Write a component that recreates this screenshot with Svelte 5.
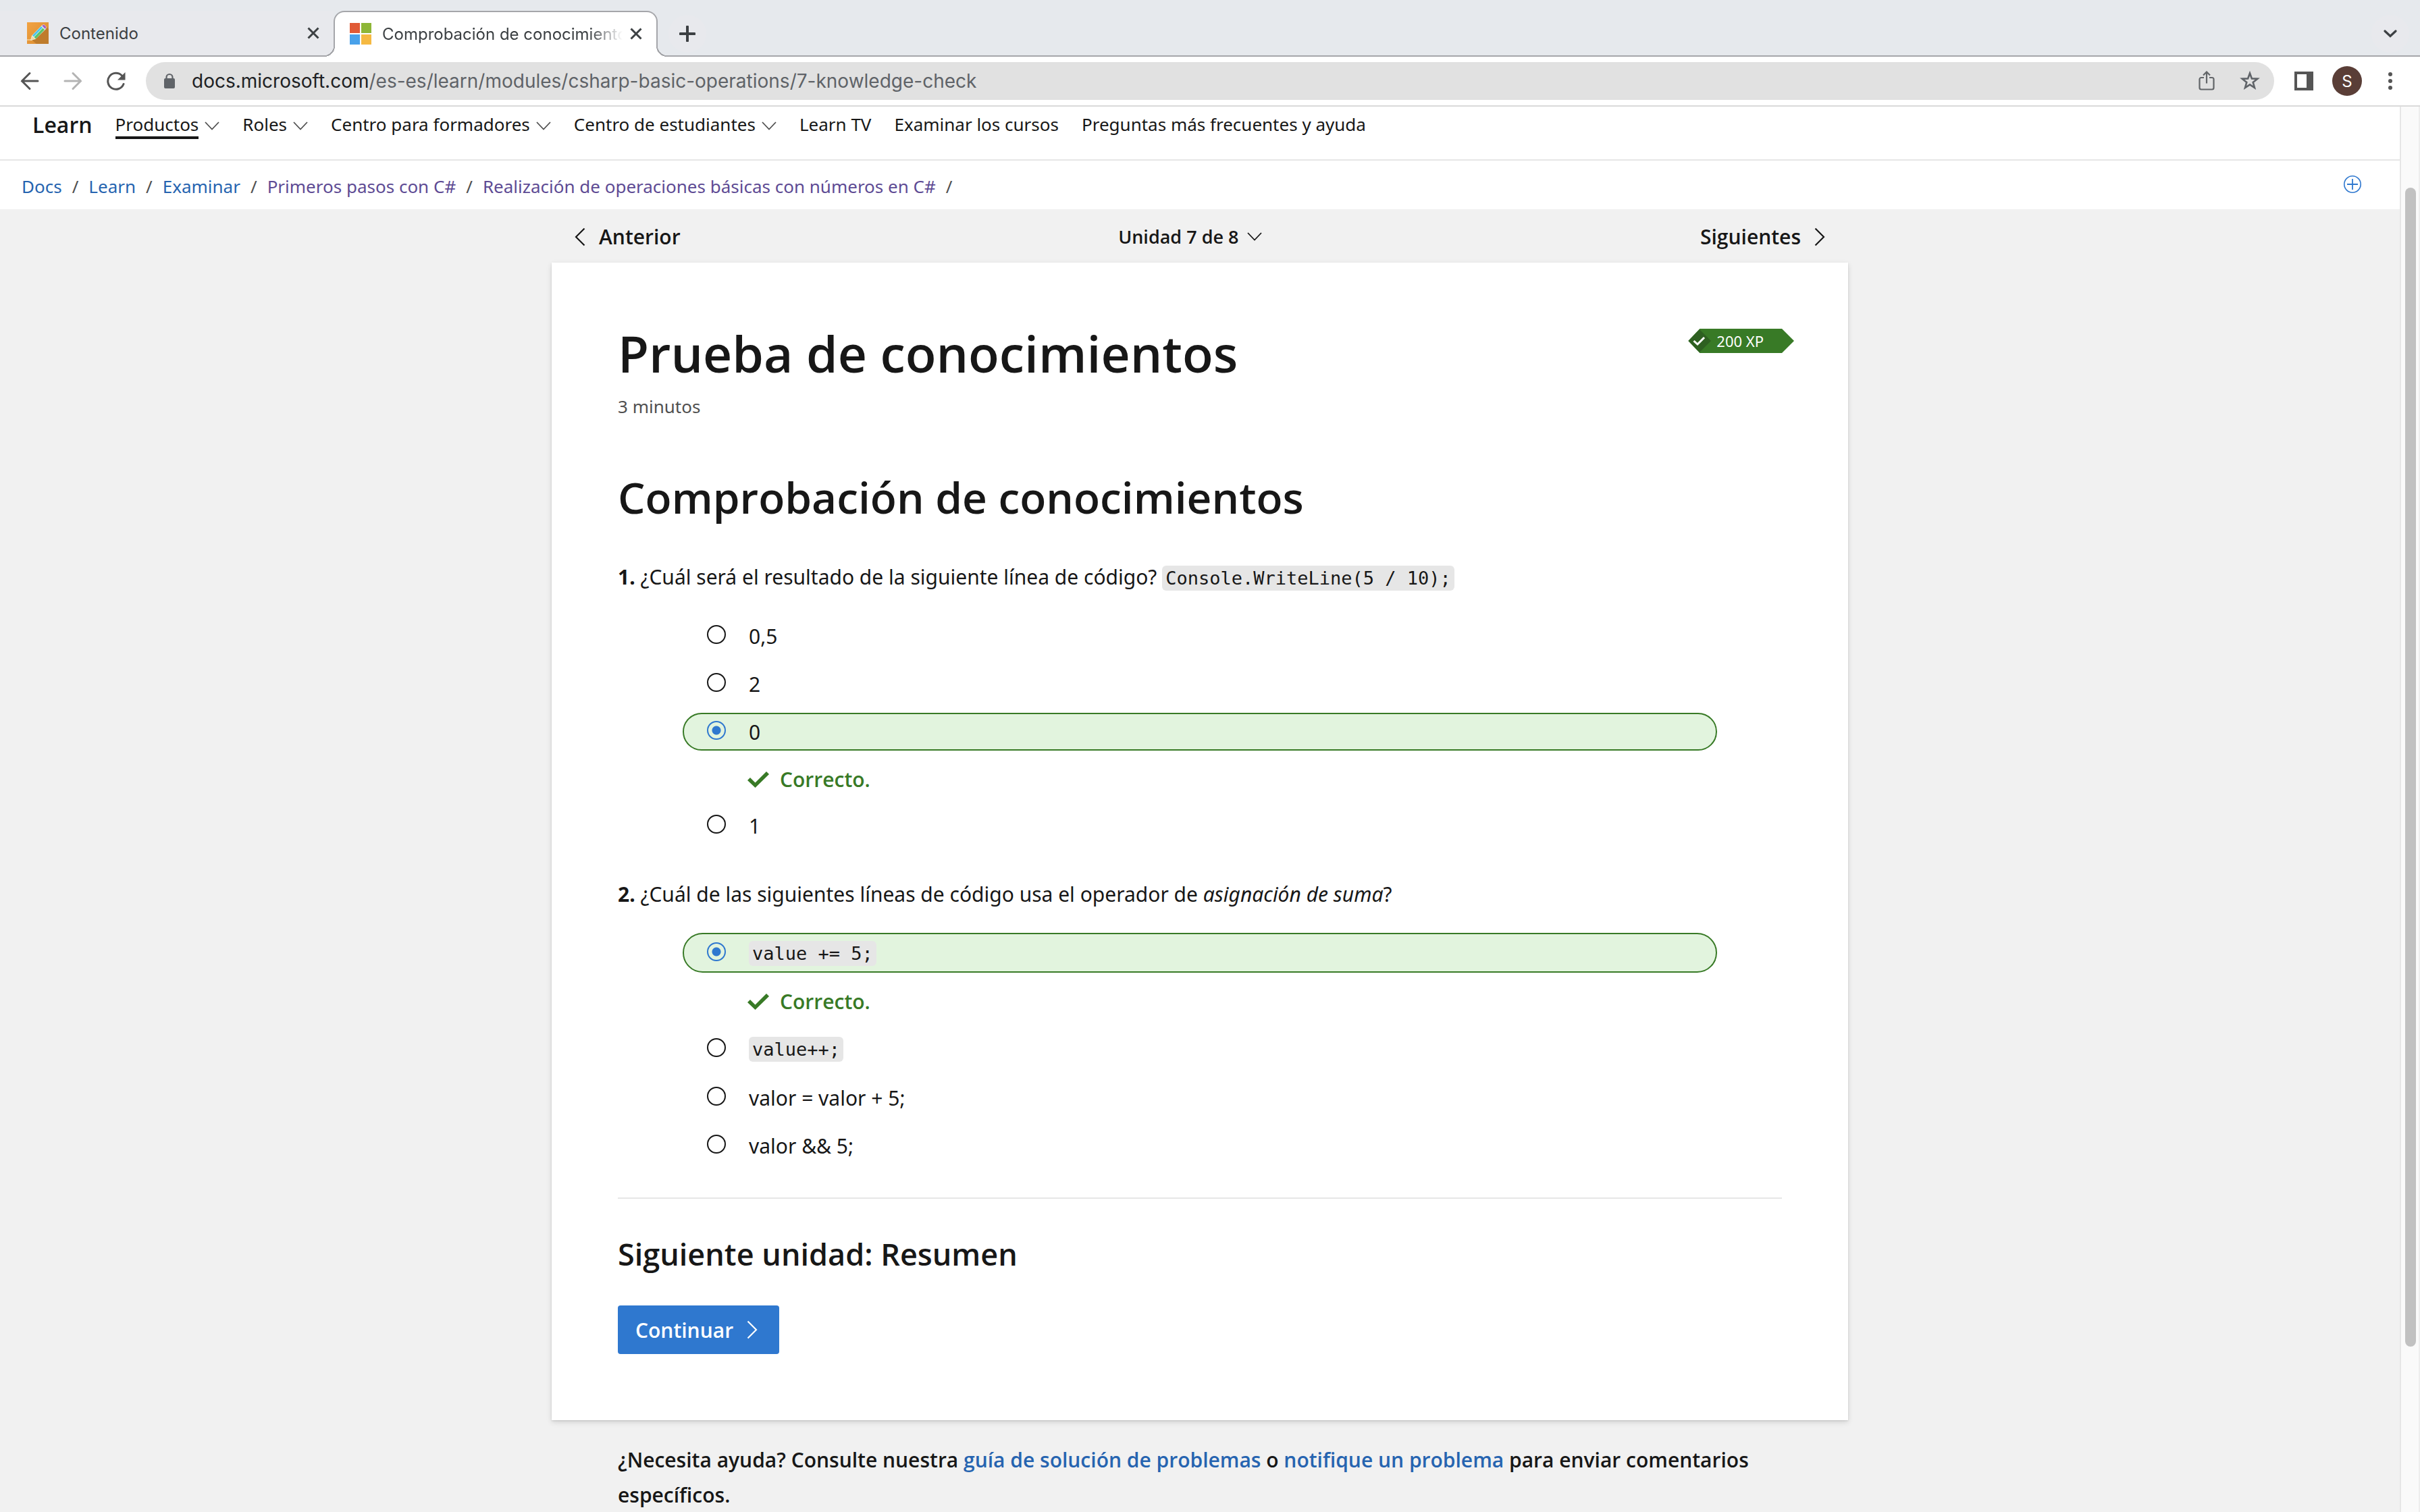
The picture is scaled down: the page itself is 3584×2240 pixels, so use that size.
<script>
  const menu = [
    { label: 'Productos', drop: true, active: true },
    { label: 'Roles', drop: true },
    { label: 'Centro para formadores', drop: true },
    { label: 'Centro de estudiantes', drop: true },
    { label: 'Learn TV' },
    { label: 'Examinar los cursos' },
    { label: 'Preguntas más frecuentes y ayuda' }
  ];

  const crumbs = [
    { label: 'Docs' },
    { label: 'Learn' },
    { label: 'Examinar' },
    { label: 'Primeros pasos con C#', visited: true },
    { label: 'Realización de operaciones básicas con números en C#', visited: true }
  ];

  const questions = $state([
    {
      text: '¿Cuál será el resultado de la siguiente línea de código?',
      code: 'Console.WriteLine(5 / 10);',
      options: [{ text: '0,5' }, { text: '2' }, { text: '0', correct: true }, { text: '1' }],
      picked: 2
    },
    {
      text: '¿Cuál de las siguientes líneas de código usa el operador de',
      emphasis: 'asignación de suma',
      options: [
        { text: 'value += 5;', code: true, correct: true },
        { text: 'value++;', code: true },
        { text: 'valor = valor + 5;' },
        { text: 'valor && 5;' }
      ],
      picked: 0
    }
  ]);
</script>

{#snippet cross()}
  <svg width="20" height="20" viewBox="0 0 20 20" aria-hidden="true">
    <path d="M2.5 2.5 17.5 17.5M17.5 2.5 2.5 17.5" fill="none" stroke="#3c4043" stroke-width="3" />
  </svg>
{/snippet}

{#snippet chevronDown(color)}
  <svg width="22" height="13" viewBox="0 0 22 13" aria-hidden="true">
    <path d="M1 1 11 11.500 21 1" fill="none" stroke={color} stroke-width="1.800" />
  </svg>
{/snippet}

{#snippet chevronRight()}
  <svg width="16" height="28" viewBox="0 0 16 28" aria-hidden="true">
    <path d="M1.500 1.500 14 14 1.500 26.500" fill="none" stroke="currentColor" stroke-width="2.200" />
  </svg>
{/snippet}

<div class="browser">
  <header class="tabs">
    <div class="tab">
      <svg width="32" height="32" viewBox="0 0 32 32" aria-hidden="true">
        <defs>
          <linearGradient id="wood" x1="0" y1="0" x2="1" y2="1">
            <stop offset="0" stop-color="#f2a342" />
            <stop offset="1" stop-color="#d98a2e" />
          </linearGradient>
        </defs>
        <path d="M0 0h32v32H0z" fill="url(#wood)" />
        <path d="M28 6 32 10V32H14L7 26z" fill="#bf7c2c" />
        <path d="M0 26h8" stroke="#f6cf94" stroke-width="1.500" />
        <path d="M5 27 7 20 22 4.500 25 3 29 7 28 10 12.500 25z" fill="#e9f3ea" />
        <path d="M8 19.500 21 6l2 2L10 21.500z" fill="#4cc3ee" />
        <path d="M10.500 22 23.500 8.500l2.500 2.500L13 24.500z" fill="#5cc46a" />
        <path d="M22 5 25 3.500 28.500 7 27 10z" fill="#a75cc0" />
        <path d="M7.500 20.500 12 24.500 5.500 26.500z" fill="#f4d9a6" />
      </svg>
      <button class="tab-title">Contenido</button>
      <button class="close" aria-label="Cerrar pestaña">{@render cross()}</button>
    </div>
    <div class="tab active">
      <svg width="32" height="32" viewBox="0 0 32 32" aria-hidden="true">
        <path d="M0 0h15v15H0z" fill="#e05a36" />
        <path d="M17 0h15v15H17z" fill="#8db637" />
        <path d="M0 17h15v15H0z" fill="#48a1ea" />
        <path d="M17 17h15v15H17z" fill="#f5b942" />
      </svg>
      <button class="tab-title fade">Comprobación de conocimientos</button>
      <button class="close" aria-label="Cerrar pestaña">{@render cross()}</button>
    </div>
    <button class="round" aria-label="Nueva pestaña">
      <svg width="24" height="24" viewBox="0 0 24 24" aria-hidden="true">
        <path d="M12 1.500v21M1.500 12h21" stroke="#3c4043" stroke-width="4" stroke-linecap="round" />
      </svg>
    </button>
    <button class="round last" aria-label="Buscar pestañas">
      <svg width="20" height="12" viewBox="0 0 20 12" aria-hidden="true">
        <path d="M2 2 10 9.500 18 2" fill="none" stroke="#3c4043" stroke-width="3.200" stroke-linecap="round" />
      </svg>
    </button>
  </header>

  <div class="toolbar">
    <button class="tool" aria-label="Atrás">
      <svg width="28" height="28" viewBox="0 0 28 28" fill="none" stroke="#555" stroke-width="3" stroke-linecap="round" aria-hidden="true">
        <path d="M26 14H2.500M14 2.500 2.500 14 14 25.500" />
      </svg>
    </button>
    <button class="tool" aria-label="Adelante">
      <svg width="28" height="28" viewBox="0 0 28 28" fill="none" stroke="#b4b4b4" stroke-width="3" stroke-linecap="round" aria-hidden="true">
        <path d="M2 14h23.500M14 2.500 25.500 14 14 25.500" />
      </svg>
    </button>
    <button class="tool" aria-label="Volver a cargar">
      <svg width="28" height="28" viewBox="0 0 28 28" aria-hidden="true">
        <path d="M25 18.500A12 12 0 1 1 22.500 6" fill="none" stroke="#555" stroke-width="3" stroke-linecap="round" />
        <path d="M27.500 1v11.500H16z" fill="#555" />
      </svg>
    </button>
    <div class="omnibox">
      <svg width="18" height="24" viewBox="0 0 18 24" aria-hidden="true">
        <path d="M4.500 10V6.500a4.500 4.500 0 0 1 9 0V10" fill="none" stroke="#5f6368" stroke-width="2.200" />
        <rect x="1" y="8" width="16" height="15" rx="2" fill="#5f6368" />
      </svg>
      <span class="url">docs.microsoft.com<span class="path">/es-es/learn/modules/csharp-basic-operations/7-knowledge-check</span></span>
      <button class="tool" aria-label="Compartir">
        <svg width="24" height="30" viewBox="0 0 24 30" fill="none" stroke="#626568" stroke-width="2.200" aria-hidden="true">
          <path d="M8 10H4a2.500 2.500 0 0 0-2.500 2.500V25A2.500 2.500 0 0 0 4 27.500h16a2.500 2.500 0 0 0 2.500-2.500V12.500A2.500 2.500 0 0 0 20 10h-4" />
          <path d="M12 18.500V2M7 6.500 12 1.500 17 6.500" />
        </svg>
      </button>
      <button class="tool" aria-label="Añadir a marcadores">
        <svg width="30" height="30" viewBox="0 0 30 30" aria-hidden="true">
          <path d="M15 3.500 17.900 11.400 26.300 11.700 19.700 16.900 22 25 15 20.300 8 25 10.300 16.900 3.700 11.700 12.100 11.400Z" fill="none" stroke="#5f6368" stroke-width="2.600" />
        </svg>
      </button>
    </div>
    <div class="actions">
      <button class="tool" aria-label="Panel lateral">
        <svg width="28" height="28" viewBox="0 0 28 28" aria-hidden="true">
          <path d="M0 0h28v28H0zM4 4v20h14V4z" fill="#555" fill-rule="evenodd" />
        </svg>
      </button>
      <button class="tool" aria-label="Perfil"><span class="avatar">S</span></button>
      <button class="tool" aria-label="Menú">
        <svg width="6" height="26" viewBox="0 0 6 26" fill="#555" aria-hidden="true">
          <circle cx="3" cy="3" r="3" /><circle cx="3" cy="13" r="3" /><circle cx="3" cy="23" r="3" />
        </svg>
      </button>
    </div>
  </div>

  <div class="viewport">
    <div class="page">
      <nav class="site-nav">
        <a class="brand" href="#learn">Learn</a>
        {#each menu as item}
          {#if item.drop}
            <button class="menu">
              <span class:current={item.active}>{item.label}</span>
              <span class="arrow">{@render chevronDown('#505050')}</span>
            </button>
          {:else}
            <a class="menu" href="#menu">{item.label}</a>
          {/if}
        {/each}
      </nav>

      <div class="crumb-bar">
        <nav class="crumbs">
          {#each crumbs as crumb}
            <a href="#crumb" class:visited={crumb.visited}>{crumb.label}</a><span>/</span>
          {/each}
        </nav>
        <button class="save" aria-label="Guardar">
          <svg width="26" height="26" viewBox="0 0 26 26" fill="none" stroke="#2f78cf" aria-hidden="true">
            <circle cx="13" cy="13" r="12.200" stroke-width="1.600" />
            <path d="M13 5v16M5 13h16" stroke-width="1.800" />
          </svg>
        </button>
      </div>

      <main>
        <nav class="unit-nav">
          <a href="#prev">
            <span class="flip">{@render chevronRight()}</span>Anterior
          </a>
          <button class="unit">Unidad 7 de 8 {@render chevronDown('#171717')}</button>
          <a href="#next">Siguientes {@render chevronRight()}</a>
        </nav>

        <article class="card">
          <div class="heading">
            <h1>Prueba de conocimientos</h1>
            <div class="badge">
              <svg width="36" height="36" viewBox="0 0 36 36" aria-hidden="true">
                <path d="M17 1 34 18 17 35 0 18z" fill="#2e6021" />
                <path d="M8.500 18 14 23 24 13" fill="none" stroke="#fff" stroke-width="3" />
              </svg>
              <span>200 XP</span>
            </div>
          </div>
          <p class="time">3 minutos</p>

          <h2>Comprobación de conocimientos</h2>

          {#each questions as q, i}
            <section class="question">
              <p class="ask">
                <b>{i + 1}.</b> {q.text}
                {#if q.code}<code>{q.code}</code>{/if}{#if q.emphasis}<em>{q.emphasis}</em>?{/if}
              </p>
              <div class="options">
                {#each q.options as option, j}
                  <label class="option" class:with-code={option.code} class:correct={option.correct && q.picked === j}>
                    <input type="radio" name="question-{i}" value={j} bind:group={q.picked} />
                    {#if option.code}<span><code>{option.text}</code></span>{:else}<span>{option.text}</span>{/if}
                  </label>
                  {#if option.correct && q.picked === j}
                    <p class="feedback">
                      <svg width="32" height="24" viewBox="0 0 32 24" aria-hidden="true">
                        <path d="M0 13 4 9 11.500 16.500 28 0 32 4 11.500 24z" fill="#387a26" />
                      </svg>
                      Correcto.
                    </p>
                  {/if}
                {/each}
              </div>
            </section>
          {/each}

          <hr />
          <h3>Siguiente unidad: Resumen</h3>
          <button class="continue">Continuar {@render chevronRight()}</button>
        </article>

        <p class="help">
          ¿Necesita ayuda? Consulte nuestra <a href="#guide">guía de solución de problemas</a> o
          <a href="#report">notifique un problema</a> para enviar comentarios específicos.
        </p>
      </main>
    </div>
    <div class="scrollbar"><div class="thumb"></div></div>
  </div>
</div>

<style>
  :global(body) {
    margin: 0;
  }

  .browser {
    display: flex;
    flex-direction: column;
    height: 100vh;
    overflow: hidden;
    background: #f1f1f1;
    color: #171717;
    font-family: "Noto Sans", "Open Sans", sans-serif;
    font-size: 30px;
  }

  .browser *,
  .browser *::before,
  .browser *::after {
    box-sizing: border-box;
  }

  svg {
    display: block;
    flex: none;
  }

  button {
    padding: 0;
    border: 0;
    background: none;
    color: inherit;
    font: inherit;
  }

  a {
    color: inherit;
    text-decoration: none;
  }

  p,
  h1,
  h2,
  h3 {
    margin: 0;
  }

  h1,
  h2,
  h3,
  .brand,
  .unit-nav,
  .feedback,
  .continue,
  .help {
    font-family: "Open Sans", "Noto Sans", sans-serif;
    font-weight: 600;
  }

  /* Tab strip */
  .tabs {
    display: flex;
    flex: none;
    align-items: flex-end;
    height: 84px;
    border-bottom: 2px solid #a5a6aa;
    background: #e6e9ed;
    font-family: Inter, sans-serif;
    font-size: 24px;
  }

  .tab {
    display: flex;
    align-items: center;
    gap: 16px;
    width: 494px;
    height: 66px;
    padding: 0 14px 0 40px;
    background: #e8e9ed;
    color: #3c4043;
  }

  .tab.active {
    position: relative;
    width: 480px;
    height: 68px;
    margin-bottom: -2px;
    padding: 0 14px 2px 22px;
    border: 2px solid #a5a6aa;
    border-bottom: 0;
    border-radius: 16px 16px 0 0;
    background: #fff;
  }

  .tab.active::before,
  .tab.active::after {
    content: "";
    position: absolute;
    bottom: 0;
    width: 16px;
    height: 16px;
  }

  .tab.active::before {
    left: -16px;
    background: radial-gradient(circle at 0 0, transparent 14px, #a5a6aa 14px, #a5a6aa 16px, #fff 16px);
  }

  .tab.active::after {
    right: -16px;
    background: radial-gradient(circle at 100% 0, transparent 14px, #a5a6aa 14px, #a5a6aa 16px, #fff 16px);
  }

  .tab-title {
    flex: 1;
    min-width: 0;
    overflow: hidden;
    text-align: left;
    white-space: nowrap;
  }

  .fade {
    margin-right: -12px;
    mask-image: linear-gradient(to right, #000 86%, transparent);
  }

  .close {
    display: grid;
    place-items: center;
    width: 32px;
    height: 32px;
  }

  .round {
    display: grid;
    place-items: center;
    width: 56px;
    height: 56px;
    margin: 0 16px 4px;
    border-radius: 50%;
    background: #e8e9ed;
  }

  .last {
    margin-left: auto;
  }

  /* Toolbar */
  .toolbar {
    display: flex;
    flex: none;
    align-items: center;
    height: 74px;
    padding: 0 12px;
    border-bottom: 2px solid #dadada;
    background: #fff;
    font-family: Inter, sans-serif;
  }

  .tool {
    display: grid;
    flex: none;
    place-items: center;
    width: 64px;
    height: 56px;
  }

  .omnibox {
    display: flex;
    flex: 1;
    align-items: center;
    height: 56px;
    margin: 0 12px;
    padding: 0 4px 0 26px;
    border-radius: 28px;
    background: #e1e1e1;
    font-size: 28px;
  }

  .url {
    flex: 1;
    margin-left: 24px;
    color: #202124;
  }

  .path {
    color: #5f6368;
  }

  .actions {
    display: flex;
  }

  .avatar {
    display: grid;
    place-items: center;
    width: 44px;
    height: 44px;
    border-radius: 50%;
    background: #5a3e37;
    color: #fff;
    font-size: 24px;
  }

  /* Page */
  .viewport {
    display: flex;
    flex: 1;
    min-height: 0;
  }

  .page {
    flex: 1;
    min-width: 0;
    overflow: hidden;
  }

  .scrollbar {
    width: 30px;
    padding: 120px 4px 0 6px;
    border-right: 2px solid #eee;
    border-left: 2px solid #e6e6e6;
    background: #fafafa;
  }

  .thumb {
    height: 87.500%;
    border-radius: 8px;
    background: #c1c1c1;
  }

  .site-nav {
    display: flex;
    align-items: flex-start;
    gap: 34px;
    height: 80px;
    padding: 9px 48px 0;
    border-bottom: 2px solid #e6e6e6;
    background: #fff;
    font-size: 26px;
    line-height: 35px;
  }

  .brand {
    font-size: 32px;
  }

  .menu {
    display: flex;
    gap: 9px;
  }

  .arrow {
    display: flex;
    align-items: center;
    height: 38px;
  }

  .current {
    border-bottom: 4px solid #171717;
  }

  .crumb-bar {
    display: flex;
    align-items: center;
    justify-content: space-between;
    height: 72px;
    padding: 4px 57px 0 32px;
    background: #fff;
  }

  .crumbs {
    display: flex;
    gap: 15px;
    color: #505050;
    font-size: 26px;
  }

  .crumbs a,
  .help a {
    color: #2664b0;
  }

  .crumbs .visited {
    color: #5e4b94;
  }

  .save {
    padding-bottom: 6px;
  }

  main {
    max-width: 1920px;
    margin: 0 auto;
  }

  .unit-nav {
    display: flex;
    align-items: center;
    justify-content: space-between;
    height: 79px;
    padding: 2px 34px 0;
  }

  .unit-nav a {
    display: flex;
    align-items: center;
    gap: 20px;
  }

  .flip {
    transform: scaleX(-1);
  }

  .unit {
    display: flex;
    align-items: center;
    gap: 13px;
    font-size: 27px;
  }

  .card {
    padding: 86px 98px 98px;
    background: #fff;
    box-shadow: 0 3px 8px rgba(0, 0, 0, 0.13), 0 1px 2px rgba(0, 0, 0, 0.11);
  }

  .heading {
    display: flex;
    align-items: flex-start;
    justify-content: space-between;
  }

  h1 {
    font-size: 75px;
    line-height: 96px;
  }

  .badge {
    display: flex;
    align-items: center;
    gap: 6px;
    height: 36px;
    margin: 12px -18px 0 0;
    padding-right: 45px;
    background: #387a26;
    clip-path: polygon(17px 0, calc(100% - 18px) 0, 100% 50%, calc(100% - 18px) 100%, 17px 100%, 0 50%);
    color: #fff;
    font-size: 22px;
  }

  .time {
    margin-top: 11px;
    color: #505050;
    font-size: 26px;
    line-height: 40px;
  }

  h2 {
    margin: 73px 0 50px;
    font-size: 64px;
    line-height: 84px;
  }

  .question + .question {
    margin-top: 48px;
  }

  .ask {
    line-height: 52px;
  }

  code {
    padding: 3px 5px;
    border-radius: 6px;
    background: #e6e6e6;
    font-family: "DejaVu Sans Mono", monospace;
    font-size: 27px;
  }

  .options {
    display: flex;
    flex-direction: column;
    gap: 15px;
    margin: 31px 96px 0;
  }

  .option {
    display: flex;
    align-items: flex-start;
    gap: 34px;
    padding: 2px 34px 0;
    border: 2px solid transparent;
    border-radius: 30px;
    line-height: 50px;
  }

  .option.correct {
    border-color: #387a26;
    background: #e2f4de;
  }

  .option input {
    flex: none;
    width: 28px;
    height: 28px;
    margin: 8px 0 0;
    border: 2px solid #171717;
    border-radius: 50%;
    appearance: none;
  }

  .option input:checked {
    border-color: #2f78cf;
    background: radial-gradient(circle, #2f78cf 6px, transparent 7px);
  }

  .with-code {
    min-height: 59px;
  }

  .with-code input {
    margin-top: 10px;
  }

  .feedback {
    display: flex;
    align-items: center;
    gap: 16px;
    margin-left: 96px;
    padding-top: 2px;
    color: #387a26;
    line-height: 51px;
  }

  hr {
    height: 2px;
    margin: 49px 0 52px;
    border: 0;
    background: #e6e6e6;
  }

  h3 {
    font-size: 45px;
    line-height: 60px;
  }

  .continue {
    display: flex;
    align-items: center;
    gap: 20px;
    height: 72px;
    margin-top: 46px;
    padding: 0 32px 0 26px;
    border-radius: 4px;
    background: #2f78cf;
    color: #fff;
  }

  .help {
    margin-top: 33px;
    padding: 0 98px;
    line-height: 52px;
  }
</style>
